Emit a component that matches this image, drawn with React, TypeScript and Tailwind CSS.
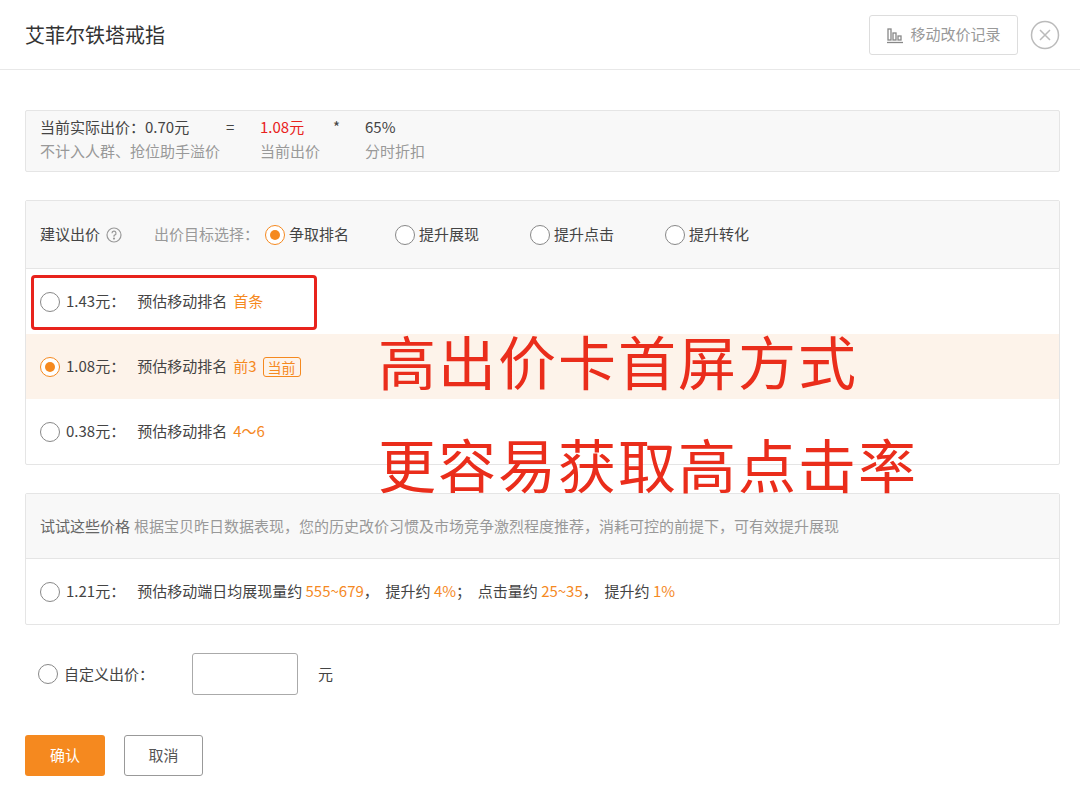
import React from 'react';

const font = { fontFamily: '"Noto Sans CJK SC", "Liberation Sans", sans-serif' };

const Radio = ({ on = false }: { on?: boolean }) => (
  <span
    className={`inline-flex items-center justify-center w-[20px] h-[20px] rounded-full border-[1.5px] shrink-0 bg-white ${
      on ? 'border-[#f5891f]' : 'border-[#888]'
    }`}
  >
    {on && <span className="w-[10px] h-[10px] rounded-full bg-[#f5891f]" />}
  </span>
);

const O = ({ children }: { children: React.ReactNode }) => <span className="text-[#f5891f]">{children}</span>;

export default function App() {
  return (
    <div className="relative w-[1080px] h-[792px] bg-white text-[#444] overflow-hidden" style={font}>
      {/* Header */}
      <div className="h-[70px] border-b border-[#e8e8e8] flex items-center justify-between pl-[25px] pr-[20px]">
        <span className="text-[20px] text-[#333]">艾菲尔铁塔戒指</span>
        <div className="flex items-center gap-[12px]">
          <div className="h-[40px] w-[149px] border border-[#ddd] rounded-[3px] flex items-center justify-center gap-[6px] text-[15px] text-[#999]">
            <svg width="18" height="18" viewBox="0 0 18 18" fill="none" stroke="#888" strokeWidth="1.3">
              <rect x="2" y="3" width="3" height="11" />
              <rect x="7" y="7" width="3" height="7" />
              <rect x="12" y="10" width="3" height="4" />
              <line x1="1" y1="16.5" x2="17" y2="16.5" />
            </svg>
            移动改价记录
          </div>
          <svg width="30" height="30" viewBox="0 0 30 30" fill="none" stroke="#bbb" strokeWidth="1.5">
            <circle cx="15" cy="15" r="13.5" />
            <path d="M10 10 L20 20 M20 10 L10 20" />
          </svg>
        </div>
      </div>

      <div className="px-[25px] pr-[20px] pt-[40px] flex flex-col">
        {/* Current price box */}
        <div className="h-[62px] border border-[#e5e5e5] rounded-[2px] bg-[#f8f8f8] px-[14px] pt-[4px] text-[15px] leading-[24px]">
          <div className="flex">
            <span className="w-[186px]">当前实际出价：0.70元</span>
            <span className="w-[34px]">=</span>
            <span className="w-[73px] text-[#e8231d]">1.08元</span>
            <span className="w-[32px]">*</span>
            <span>65%</span>
          </div>
          <div className="flex text-[#999]">
            <span className="w-[220px]">不计入人群、抢位助手溢价</span>
            <span className="w-[105px]">当前出价</span>
            <span>分时折扣</span>
          </div>
        </div>

        {/* Suggested bids */}
        <div className="mt-[28px] border border-[#e5e5e5] rounded-[2px] text-[15px]">
          <div className="h-[68px] bg-[#f8f8f8] border-b border-[#e5e5e5] flex items-center px-[14px]">
            <span>建议出价</span>
            <svg className="ml-[6px]" width="16" height="16" viewBox="0 0 16 16" fill="none" stroke="#999" strokeWidth="1.2">
              <circle cx="8" cy="8" r="7" />
              <path d="M6 6.2a2 2 0 1 1 2.6 1.9c-.5.2-.6.5-.6 1v.6" />
              <circle cx="8" cy="11.6" r=".5" fill="#999" />
            </svg>
            <span className="ml-[32px] text-[#999]">出价目标选择：</span>
            <span className="ml-[6px] flex items-center gap-[4px] w-[130px]"><Radio on />争取排名</span>
            <span className="flex items-center gap-[4px] w-[135px]"><Radio />提升展现</span>
            <span className="flex items-center gap-[4px] w-[135px]"><Radio />提升点击</span>
            <span className="flex items-center gap-[4px]"><Radio />提升转化</span>
          </div>
          <div className="h-[65px] flex items-center px-[14px] gap-[6px]">
            <Radio />1.43元：<span className="ml-[6px]">预估移动排名</span> <O>首条</O>
          </div>
          <div className="h-[65px] flex items-center px-[14px] gap-[6px] bg-[#fdf3ea]">
            <Radio on />1.08元：<span className="ml-[6px]">预估移动排名</span> <O>前3</O>
            <span className="border border-[#f5891f] rounded-[3px] text-[#f5891f] px-[4px] leading-[18px] text-[14px]">当前</span>
          </div>
          <div className="h-[65px] flex items-center px-[14px] gap-[6px]">
            <Radio />0.38元：<span className="ml-[6px]">预估移动排名</span> <O>4～6</O>
          </div>
        </div>

        {/* Try these prices */}
        <div className="mt-[28px] border border-[#e5e5e5] rounded-[2px] text-[15px]">
          <div className="h-[65px] bg-[#f8f8f8] border-b border-[#e5e5e5] flex items-center px-[14px]">
            <span className="text-[#666]">试试这些价格</span>
            <span className="ml-[4px] text-[#999]">根据宝贝昨日数据表现，您的历史改价习惯及市场竞争激烈程度推荐，消耗可控的前提下，可有效提升展现</span>
          </div>
          <div className="h-[65px] flex items-center px-[14px] gap-[6px]">
            <Radio />1.21元：
            <span className="ml-[6px]">预估移动端日均展现量约 <O>555~679</O>，&nbsp; 提升约 <O>4%</O>；&nbsp; 点击量约 <O>25~35</O>，&nbsp; 提升约 <O>1%</O></span>
          </div>
        </div>

        {/* Custom */}
        <div className="mt-[28px] h-[42px] flex items-center text-[15px] pl-[13px]">
          <span className="flex items-center gap-[6px] w-[154px]"><Radio />自定义出价：</span>
          <span className="w-[106px] h-[42px] border border-[#aaa] rounded-[3px]" />
          <span className="ml-[20px]">元</span>
        </div>

        <div className="mt-[40px] flex gap-[19px] text-[15px]">
          <button className="w-[80px] h-[41px] bg-[#f5891f] text-white rounded-[3px]">确认</button>
          <button className="w-[79px] h-[41px] border border-[#999] rounded-[3px] text-[#555]">取消</button>
        </div>
      </div>

      {/* Annotations */}
      <div className="absolute left-[31px] top-[275px] w-[286px] h-[55px] border-[3px] border-[#e8231d] rounded-[4px]" />
      <div className="absolute left-[378px] top-[322px] text-[58px] leading-[76px] text-[#ea2d1b] tracking-[2px]">高出价卡首屏方式</div>
      <div className="absolute left-[378px] top-[425px] text-[58px] leading-[76px] text-[#ea2d1b] tracking-[2px]">更容易获取高点击率</div>
    </div>
  );
}
